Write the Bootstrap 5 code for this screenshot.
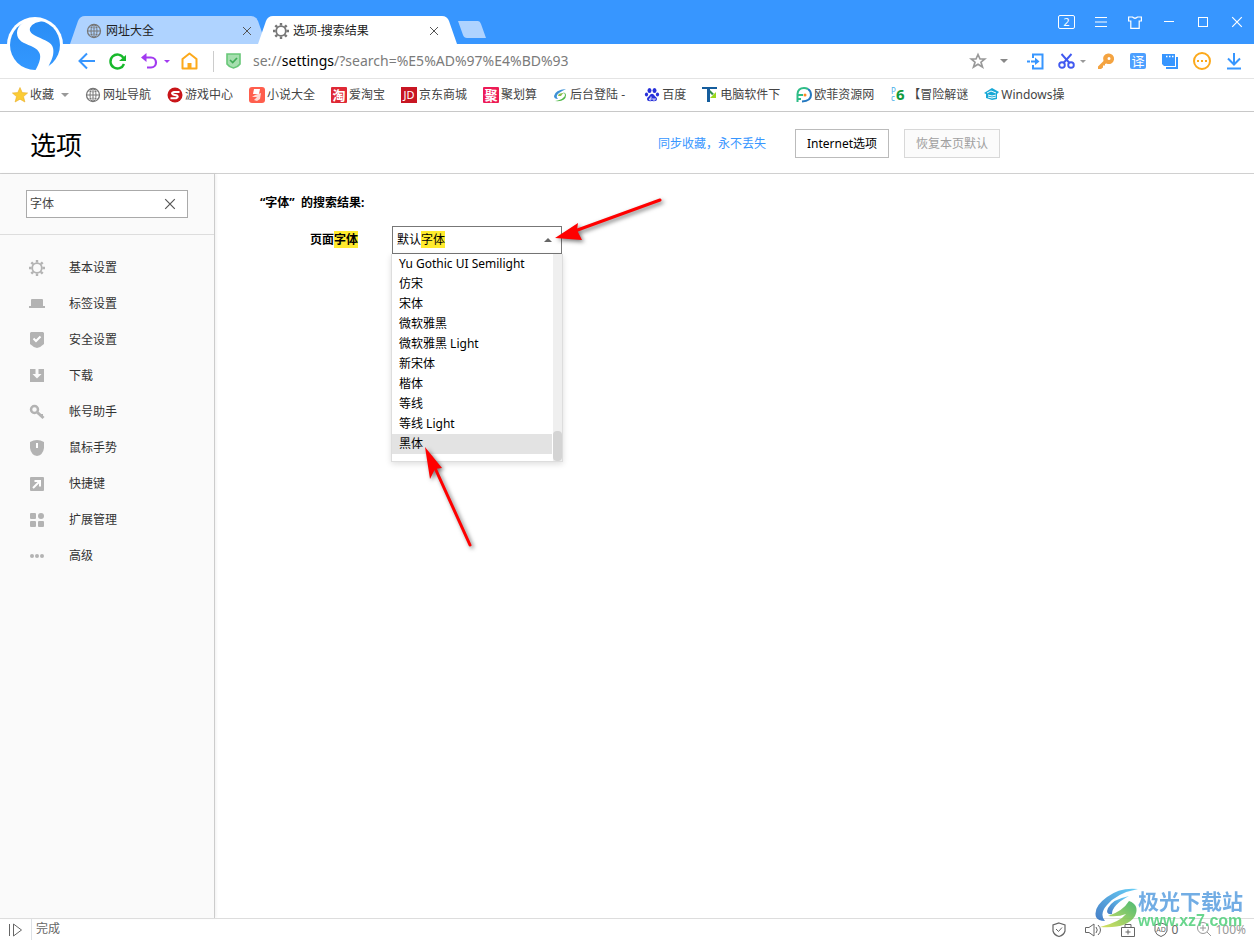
<!DOCTYPE html>
<html lang="zh-CN">
<head>
<meta charset="utf-8">
<meta name="viewport" content="width=device-width, initial-scale=1">
<title>选项-搜索结果</title>
<link rel="stylesheet" href="https://cdn.jsdelivr.net/npm/bootstrap@5.3.0/dist/css/bootstrap.min.css">
<style>
  body { font: 12px/20px "Noto Sans", "Noto Sans CJK SC", sans-serif; color: #000; background: #fff; }
  svg { display: block; flex: none; overflow: visible; }
  a { color: inherit; text-decoration: none; }
  button { color: inherit; }
  .plain { border: 0; background: none; padding: 0; display: flex; align-items: center; justify-content: center; }
  .ln { fill: none; stroke: currentColor; }

  /* title bar */
  .titlebar { height: 44px; background: #3796ff; padding-left: 70px; }
  .browser-logo { position: absolute; left: 7px; top: 16px; }
  .tab { height: 28px; width: 199px; padding: 2px 18px 0 15px; color: #222; clip-path: path("M0 28 L8 5 Q10 0 15 0 L184 0 Q189 0 191 5 L199 28 Z"); }
  .tab svg { color: #777; }
  .tab .plain svg { color: #555; }
  .tab-idle { background: #afd3ff; width: 196px; padding-right: 14px; padding-left: 16px; clip-path: path("M0 28 L8 5 Q10 0 15 0 L181 0 Q186 0 188 5 L196 28 Z"); }
  .tab-on { background: #fff; margin-left: -8px; }
  .newtab { margin: 0 0 6px 1px; }
  .winbtn { width: 34px; height: 44px; color: #fff; }

  /* address bar */
  .toolbar { height: 35px; padding: 0 4px 0 71px; border-bottom: 1px solid #e4e4e4; }
  .tool { height: 34px; width: 32px; }
  .navtool { height: 34px; width: 31px; }
  .narrow { width: 20px; }
  .caret { width: 0; border: 4px solid transparent; border-top: 4px solid currentColor; border-bottom: 0; }
  .caret-sm { border-left-width: 3px; border-right-width: 3px; border-top-width: 3px; }
  .vline { width: 1px; height: 21px; background: #ccc; }
  .address { font-size: 14px; color: #7b7b7b; outline: 0; }
  .address b { font-weight: 400; color: #000; }

  /* favourites */
  .favs { height: 33px; padding: 0 12px; gap: 16px; border-bottom: 1px solid #c8c8c8; color: #444; white-space: nowrap; }
  .favs a, .favs button { display: flex; align-items: center; gap: 2px; }
  .favs .caret { margin-left: 5px; color: #999; }

  /* page header */
  .pagehead { height: 62px; border-bottom: 1px solid #d0d0d0; }
  .headrow { max-width: 1000px; padding: 2px 0 0 30px; }
  .pagehead h1 { font-size: 26px; line-height: 36px; font-weight: 400; margin-top: 2px; }
  .synclink { color: #3796ff; margin-right: 29px; }
  .boxbtn { height: 29px; padding: 0 11px; border: 1px solid #bbb; background: #fff; }
  .boxbtn:disabled { color: #a0a0a0; border-color: #d8d8d8; background: #fbfbfb; }
  .boxbtn + .boxbtn { margin-left: 15px; }

  /* side panel */
  .side { width: 215px; background: #fafafa; border-right: 1px solid #ccc; box-shadow: 1px 0 3px #0001; }
  .finder { padding: 16px 26px; border-bottom: 1px solid #ddd; }
  .findbox { height: 28px; border: 1px solid #aaa; background: #fff; padding: 0 11px 0 3px; }
  .findbox input { border: 0; outline: 0; padding: 0; min-width: 0; flex: 1; color: #444; }
  .menu { padding-top: 15px; }
  .menu a { display: flex; align-items: center; gap: 24px; height: 36px; padding-left: 29px; color: #333; }
  .menu svg { color: #b3b3b3; }

  /* results */
  .results { padding: 19px 45px; }
  .results h2 { font-size: 12px; line-height: 20px; font-weight: 700; }
  .hit { background: #ffeb2d; color: inherit; padding: 0; }
  .fontrow { margin-top: 13px; padding-left: 50px; }
  .fontlabel { width: 82px; font-weight: 700; }
  .picker { width: 170px; }
  .pickbtn { width: 100%; height: 28px; border: 1px solid #777; padding: 0 9px 0 4px; background: #fff; }
  .up { border: 4px solid transparent; border-top: 0; border-bottom: 4px solid #666; }
  .picklist { position: absolute; top: 28px; left: -1px; width: 172px; background: #fff; border: 1px solid #ddd; border-top: 0; box-shadow: 0 2px 6px #0002; }
  .picklist ul { padding-bottom: 7px; }
  .picklist li { padding-left: 7px; height: 20px; white-space: nowrap; margin-right: 1px; }
  .picklist li[aria-selected=true] { background: #e3e3e3; }
  .track { width: 9px; background: #efefef; }
  .thumb { height: 30px; border-radius: 4px; background: #d4d4d4; }
  .arrows { position: absolute; left: 0; top: -40px; pointer-events: none; filter: drop-shadow(2px 2px 2px #0008); }

  /* status bar */
  .status { height: 22px; border-top: 1px solid #ddd; color: #666; padding-right: 8px; }
  .tray { gap: 19px; }
  .stamp { position: absolute; right: 11px; bottom: 8px; opacity: .85; pointer-events: none; }
  .stampname { font: 700 21px/24px "Noto Sans CJK SC", sans-serif; color: #5a9fe0; }
  .stampsite { font: 700 16px/18px "Liberation Sans", sans-serif; color: #4fd07a; }
</style>
</head>
<body class="d-flex flex-column min-vh-100 position-relative">

<svg width="0" height="0" class="position-absolute" aria-hidden="true">
  <symbol id="globe" viewBox="0 0 16 16"><g class="ln"><circle cx="8" cy="8" r="6.500" stroke-width="1.300"/><ellipse cx="8" cy="8" rx="3" ry="6.500"/><path d="M8 1.500V14.500M1.500 8H14.500"/><path stroke-width=".6" d="M3 4Q8 6 13 4M3 12Q8 10 13 12"/></g></symbol>
  <symbol id="gear" viewBox="0 0 16 16"><circle cx="8" cy="8" r="4.800" class="ln" stroke-width="1.800"/><path class="ln" stroke-width="2.400" d="M8 0V2.600M8 13.400V16M0 8H2.600M13.400 8H16M2.300 2.300L4.200 4.200M11.800 11.800L13.700 13.700M13.700 2.300L11.800 4.200M4.200 11.800L2.300 13.700"/></symbol>
  <symbol id="cross" viewBox="0 0 10 10"><path class="ln" d="M1 1L9 9M9 1L1 9"/></symbol>
</svg>

<header>
  <div class="titlebar d-flex align-items-end">
    <div class="tab tab-idle d-flex align-items-center">
      <svg width="16" height="16"><use href="#globe"/></svg>
      <span class="ms-1 flex-fill">网址大全</span>
      <button class="plain" aria-label="关闭标签"><svg width="10" height="10"><use href="#cross"/></svg></button>
    </div>
    <div class="tab tab-on d-flex align-items-center">
      <svg width="16" height="16"><use href="#gear"/></svg>
      <span class="ms-1 flex-fill">选项-搜索结果</span>
      <button class="plain" aria-label="关闭标签"><svg width="10" height="10"><use href="#cross"/></svg></button>
    </div>
    <button class="plain newtab" aria-label="新标签"><svg width="28" height="17"><path fill="#afd3ff" d="M0 0H20Q22 0 23 3L28 17H9Q6 17 5 14Z"/></svg></button>
    <div class="d-flex ms-auto">
      <button class="plain winbtn" aria-label="窗口数"><svg width="18" height="14"><rect x=".5" y=".5" width="16" height="13" rx="1.500" class="ln"/><text x="8.500" y="11" text-anchor="middle" font-size="11" fill="#fff">2</text></svg></button>
      <button class="plain winbtn" aria-label="菜单"><svg width="12" height="10"><path class="ln" d="M0 .5H12M0 5H12M0 9.500H12"/></svg></button>
      <button class="plain winbtn" aria-label="皮肤"><svg width="14" height="13"><path class="ln" stroke-width="1.200" d="M1 1H4.500Q7 3.500 9.500 1H13.400V5H11.200V12.400H2.800V5H.6V1Z"/></svg></button>
      <button class="plain winbtn" aria-label="最小化"><svg width="10" height="2"><path class="ln" d="M0 .5H10"/></svg></button>
      <button class="plain winbtn" aria-label="最大化"><svg width="10" height="10"><rect x=".5" y=".5" width="9" height="9" class="ln"/></svg></button>
      <button class="plain winbtn" aria-label="关闭"><svg width="12" height="12"><use href="#cross"/></svg></button>
    </div>
  </div>
  <svg class="browser-logo" width="56" height="56" viewBox="0 0 56 56" role="img" aria-label="浏览器">
    <defs><linearGradient id="lg" x2="0" y2="1"><stop stop-color="#2a8df5"/><stop offset="1" stop-color="#3398ff"/></linearGradient></defs>
    <circle cx="28" cy="29" r="28" fill="#fff"/><circle cx="28" cy="29" r="25" fill="url(#lg)"/>
    <path fill="#fff" d="M26 2C17 4 10 10 10 17C10 25 17 27 24 30C31 33 34 37 33 43Q32 48 28 55L38 55Q42 51 43 47C46 42 47 36 46 32C45 26 37 24 31 21C25 18 22 16 23 12Q26 5 40 5Q35 2 26 2Z"/>
  </svg>

  <div class="toolbar d-flex align-items-center">
    <button class="plain navtool" aria-label="后退"><svg width="18" height="16"><path class="ln" style="color:#3796ff" stroke-width="2" d="M17 8H2M9 .5L1.500 8L9 15.500"/></svg></button>
    <button class="plain navtool" aria-label="刷新"><svg width="18" height="17"><path fill="none" stroke="#17b82b" stroke-width="2.400" d="M14.500 5A7 7 0 1 0 15 11"/><path fill="#17b82b" d="M17 2V8H10Z"/></svg></button>
    <button class="plain navtool" aria-label="撤销"><svg width="16" height="16"><path fill="none" stroke="#a23af0" stroke-width="2.200" d="M4 4.500H10A5 5 0 0 1 10 14.500H6"/><path fill="#a23af0" d="M5.500 0V9L0 4.500Z"/></svg></button>
    <button class="plain" aria-label="撤销列表" style="color:#a23af0"><i class="caret caret-sm"></i></button>
    <button class="plain navtool ms-1" aria-label="主页"><svg width="17" height="18"><path fill="none" stroke="#fca91b" stroke-width="2" stroke-linejoin="round" d="M1.500 7L8.500 1.500L15.500 7V16.500H1.500Z"/><path fill="#fca91b" d="M6.500 16V11H10.500V16Z"/></svg></button>
    <span class="vline mx-2"></span>
    <svg class="ms-1" width="15" height="16"><path fill="#a5dfae" stroke="#68c778" stroke-width="1.600" d="M1 1H14V11Q12 14 7.500 15Q3 14 1 11Z"/><path fill="none" stroke="#3fab56" stroke-width="1.700" d="M4 7L6.700 9.500L11 5"/></svg>
    <div class="address ms-2 ps-1 flex-fill" role="textbox" contenteditable="true" spellcheck="false" aria-label="地址">se://<b>settings</b>/?search=%E5%AD%97%E4%BD%93</div>
    <button class="plain narrow" aria-label="收藏此页"><svg width="16" height="16"><path class="ln" style="color:#999" stroke-width="1.700" d="M8 1.500L10 6H14.700L11 9.200L12.500 14L8 11.200L3.500 14L5 9.200L1.300 6H6Z"/></svg></button>
    <button class="plain tool" aria-label="更多" style="color:#888"><i class="caret"></i></button>
    <button class="plain tool" aria-label="登录"><svg width="18" height="17"><path fill="none" stroke="#3796ff" stroke-width="2" d="M6 5V1.500H15.500V15.500H6V12M0 8.500H3M4 8.500H10"/><path fill="#3796ff" d="M8 4.500L12.500 8.500L8 12Z"/></svg></button>
    <button class="plain narrow ms-1" aria-label="截图"><svg width="17" height="16"><g fill="none" stroke="#4059f0" stroke-width="1.900"><circle cx="4" cy="12" r="2.800"/><circle cx="13" cy="12" r="2.800"/><path d="M3.500 1L11.500 10M13.500 1L5.500 10"/></g></svg></button>
    <button class="plain mx-1" aria-label="截图选项" style="color:#999"><i class="caret caret-sm"></i></button>
    <button class="plain tool" aria-label="密码"><svg width="16" height="16"><path fill="#f4a340" fill-rule="evenodd" d="M10 .5A5.300 5.300 0 1 1 8.500 10.500L7 11V12.500H5V14.500L3 16H0V13.500L5.500 8A5.300 5.300 0 0 1 10 .5ZM11 4A1.500 1.500 0 1 0 11 7A1.500 1.500 0 0 0 11 4Z"/></svg></button>
    <button class="plain tool" aria-label="翻译"><svg width="16" height="16"><rect width="16" height="16" rx="2" fill="#4da0ff"/><text x="8" y="12.500" text-anchor="middle" font-size="13" fill="#fff">译</text></svg></button>
    <button class="plain tool" aria-label="窗口"><svg width="16" height="16"><path fill="#3796ff" d="M0 1H13V13H2L0 11Z"/><path stroke="#fff" stroke-width="1.500" stroke-dasharray="1.500 1.500" d="M4 3.500H12"/><path fill="none" stroke="#3796ff" stroke-width="2" d="M15 4V15H4"/></svg></button>
    <button class="plain tool" aria-label="扩展"><svg width="18" height="18"><circle cx="9" cy="9" r="8" fill="none" stroke="#fca91b" stroke-width="2"/><path fill="#fca91b" d="M4 8H6V10H4ZM8 8H10V10H8ZM12 8H14V10H12Z"/></svg></button>
    <button class="plain tool" aria-label="下载"><svg width="14" height="17"><path fill="none" stroke="#3796ff" stroke-width="2" d="M7 0V11M1 5.500L7 11.500L13 5.500M0 15.500H14"/></svg></button>
  </div>

  <nav class="favs d-flex align-items-center" aria-label="收藏栏">
    <button class="plain"><svg width="16" height="16"><path fill="#fbcc35" stroke="#e9ad28" stroke-width=".6" d="M8 .5L10.200 5.600L15.600 6L11.500 9.600L12.900 15L8 12.200L3.100 15L4.500 9.600L.4 6L5.800 5.600Z"/></svg>收藏<i class="caret"></i></button>
    <a href="#"><svg width="16" height="16" style="color:#777"><use href="#globe"/></svg>网址导航</a>
    <a href="#"><svg width="16" height="16"><circle cx="8" cy="8" r="7.500" fill="#c91519"/><path fill="none" stroke="#fff" stroke-width="2" d="M12.500 5H7Q3.500 6 6 7.500L10 8.500Q12 10 9 11.300H3.500"/></svg>游戏中心</a>
    <a href="#"><svg width="16" height="16"><rect width="16" height="16" rx="3" fill="#ff5e4d"/><path fill="#fff" d="M5 2H11L10 7H4Z"/><path fill="#ffd9d4" d="M6 8L12 6L11 12L8 14L5 13L8 10H3Z"/></svg>小说大全</a>
    <a href="#"><svg width="16" height="16"><rect width="16" height="16" rx="1" fill="#df2936"/><text x="8" y="13" text-anchor="middle" font-size="13" font-weight="700" fill="#fff">淘</text></svg>爱淘宝</a>
    <a href="#"><svg width="16" height="16"><rect width="16" height="16" fill="#c81623"/><text x="8" y="12" text-anchor="middle" font-size="11" fill="#fff">JD</text></svg>京东商城</a>
    <a href="#"><svg width="16" height="16"><rect width="16" height="16" rx="1" fill="#ed1b55"/><text x="8" y="13" text-anchor="middle" font-size="13" font-weight="700" fill="#fff">聚</text></svg>聚划算</a>
    <a href="#"><svg width="15" height="16"><path fill="#3d91d6" d="M13 2Q2 3 1 9Q1 12 5 12Q2 9 6 6Q9 4 13 2Z"/><path fill="#50b848" d="M10 5Q14 8 10 11Q8 13 2 14Q13 15 13 8Q13 6 10 5Z"/><path fill="#88bf4a" d="M11 6Q5 6 5 9H8Q9 7 11 6Z"/></svg>后台登陆 -&nbsp;</a>
    <a href="#"><svg width="16" height="16" fill="#2730da"><ellipse cx="5.500" cy="3.500" rx="2" ry="2.500"/><ellipse cx="10.500" cy="3.500" rx="2" ry="2.500"/><ellipse cx="2.500" cy="7.500" rx="1.600" ry="2"/><ellipse cx="13.500" cy="7.500" rx="1.600" ry="2"/><path d="M8 6.800Q10 7 11 9.300Q14 11 12.500 13.500Q11 14.500 8 14Q5 14.500 3.500 13.500Q2 11 5 9.300Q6 7 8 6.800Z"/><path stroke="#fff" stroke-width=".8" fill="none" d="M7 9.500V13H5.500Q4.500 11.500 7 11M9 11V13H11V11"/></svg>百度</a>
    <a href="#"><svg width="16" height="16"><path fill="#155d9d" d="M0 0H15V2H8V15H5V2H0Z"/><path fill="#2f8f4a" d="M8 3L12 7L10 8L8 6Z"/><path fill="#9ad81c" d="M14 5V11H8Z"/></svg>电脑软件下</a>
    <a href="#"><svg width="16" height="16" fill="none" stroke-width="2"><path stroke="#2fbd87" d="M1.500 15V7Q2 1 8 1Q10 1 12 2M2 8H7M2 12H5"/><path stroke="#2478c0" d="M12 2Q15 4 15 8Q15 14 6 14.500"/><circle cx="9" cy="8" r="1.500" fill="#ff8a24"/></svg>欧菲资源网</a>
    <a href="#"><svg width="16" height="16"><text x="1" y="7" font-size="8" fill="#4bb0e8">P</text><text x="1" y="14" font-size="8" fill="#4bb0e8">c</text><text x="6" y="13" font-size="15" font-weight="700" fill="#119b40">6</text></svg>【冒险解谜</a>
    <a href="#"><svg width="15" height="16"><path fill="#18a8d6" d="M0 6L8 1L15 5L13 7V12L8 13L2 11V7Z"/><path fill="none" stroke="#fff" d="M3 6L7 4L12 6M4 8L8 9L12 8M4 10L8 11L12 10"/></svg>Windows操</a>
  </nav>
</header>

<div class="pagehead">
  <div class="headrow h-100 d-flex align-items-center">
    <h1 class="mb-0 me-auto">选项</h1>
    <a href="#" class="synclink">同步收藏，永不丢失</a>
    <button class="boxbtn">Internet选项</button>
    <button class="boxbtn" disabled>恢复本页默认</button>
  </div>
</div>

<div class="d-flex flex-fill">
  <aside class="side flex-shrink-0">
    <div class="finder"><div class="findbox d-flex align-items-center">
      <input type="text" value="字体" aria-label="搜索设置">
      <button class="plain" aria-label="清除" style="color:#555"><svg width="12" height="12"><use href="#cross"/></svg></button>
    </div></div>
    <nav class="menu">
      <a href="#"><svg width="16" height="16"><use href="#gear"/></svg>基本设置</a>
      <a href="#"><svg width="16" height="16" fill="currentColor"><path d="M2 4Q2 3 3 3H13Q14 3 14 4V10H16V12H0V10H2Z"/></svg>标签设置</a>
      <a href="#"><svg width="16" height="16"><path fill="currentColor" d="M2 0H14L15 1V12Q12 15 8 16Q4 15 1 12V1Z"/><path fill="none" stroke="#fff" stroke-width="2" d="M4.500 6.500L7 9L11.500 4.500"/></svg>安全设置</a>
      <a href="#"><svg width="16" height="16"><path fill="currentColor" d="M1 1H15V14H1Z"/><path fill="#fafafa" d="M6.500 1H9.500V6H12.500L8 10.500L3.500 6H6.500Z"/></svg>下载</a>
      <a href="#"><svg width="16" height="16" fill="none" stroke="currentColor"><circle cx="5.500" cy="5.500" r="3.500" stroke-width="2.500"/><path stroke-width="3" d="M8.500 8.500L14.500 14"/><path stroke-width="2" d="M13 10V13"/></svg>帐号助手</a>
      <a href="#"><svg width="16" height="16"><path fill="currentColor" d="M1 2Q8-2 15 2V8Q14 15 8 16Q2 15 1 8Z"/><path fill="#fff" d="M7 3H9V8H7Z"/></svg>鼠标手势</a>
      <a href="#"><svg width="16" height="16"><rect x="1" y="1" width="14" height="14" rx="1" fill="currentColor"/><path fill="none" stroke="#fff" stroke-width="2" d="M4 12L11 5M5.500 5H11V10.500"/></svg>快捷键</a>
      <a href="#"><svg width="16" height="16" fill="currentColor"><rect x="1" y="1" width="6" height="6" rx="1"/><circle cx="12" cy="4" r="3"/><rect x="1" y="9" width="6" height="6" rx="1"/><rect x="9" y="9" width="6" height="6" rx="1"/></svg>扩展管理</a>
      <a href="#"><svg width="16" height="16" fill="currentColor"><circle cx="3" cy="8" r="2"/><circle cx="8" cy="8" r="2"/><circle cx="13" cy="8" r="2"/></svg>高级</a>
    </nav>
  </aside>

  <main class="results flex-fill">
    <h2 class="mb-0">“字体”&nbsp; 的搜索结果:</h2>
    <div class="fontrow d-flex align-items-center">
      <span class="fontlabel" id="fontlabel">页面<mark class="hit">字体</mark></span>
      <div class="picker position-relative">
        <button class="pickbtn d-flex align-items-center justify-content-between" aria-haspopup="listbox" aria-expanded="true" aria-labelledby="fontlabel">
          <span>默认<mark class="hit">字体</mark></span><i class="up"></i>
        </button>
        <div class="picklist d-flex">
          <ul class="list-unstyled mb-0 flex-fill" role="listbox" aria-labelledby="fontlabel">
            <li role="option">Yu Gothic UI Semilight</li>
            <li role="option">仿宋</li>
            <li role="option">宋体</li>
            <li role="option">微软雅黑</li>
            <li role="option">微软雅黑 Light</li>
            <li role="option">新宋体</li>
            <li role="option">楷体</li>
            <li role="option">等线</li>
            <li role="option">等线 Light</li>
            <li role="option" aria-selected="true">黑体</li>
          </ul>
          <div class="track d-flex flex-column justify-content-end"><div class="thumb"></div></div>
        </div>
        <svg class="arrows" width="280" height="370" aria-hidden="true">
          <path fill="none" stroke="#f00" stroke-width="3" stroke-linecap="round" d="M268 14L180 46M78 359L43 282"/>
          <path fill="#f00" d="M163 52L186 37L185 44L190 54ZM33 261L50 282L43 283L38 293Z"/>
        </svg>
      </div>
    </div>
  </main>
</div>

<footer class="status d-flex align-items-center">
  <button class="plain ms-2" aria-label="侧边栏"><svg width="15" height="14"><path class="ln" d="M1.500 1V13M5.500 1V13L13.500 7Z"/></svg></button>
  <span class="border-start align-self-stretch ms-2 ps-1">完成</span>
  <div class="tray d-flex align-items-center ms-auto">
    <button class="plain" aria-label="安全"><svg width="14" height="15"><path class="ln" stroke-width="1.200" d="M7 1L13 3V9Q12 13 7 14.500Q2 13 1 9V3Z"/><path class="ln" d="M4 7L6.500 9.500L10 5.500"/></svg></button>
    <button class="plain" aria-label="声音"><svg width="17" height="14"><path class="ln" d="M.5 4.500H4L9 1V13L4 9.500H.5ZM11 4Q13.500 7 11 10M13 2Q18 7 13 12"/></svg></button>
    <button class="plain" aria-label="隐私"><svg width="14" height="14"><path class="ln" d="M.5 4.500H13.500V13.500H.5ZM4 4V1.500H10V4M7 6.500V11.500M4.500 9H9.500"/></svg></button>
    <button class="plain gap-1" aria-label="广告拦截"><svg width="14" height="15"><path class="ln" d="M7 1L13 3V9Q12 13 7 14.500Q2 13 1 9V3Z"/><text x="7" y="10" font-size="7" text-anchor="middle" fill="currentColor">AD</text></svg>0</button>
    <button class="plain gap-1" aria-label="缩放" style="color:#999"><svg width="14" height="15"><path class="ln" d="M6 3V9M3 6H9M10 10L14 14"/><circle cx="6" cy="6" r="5.500" class="ln"/></svg>100%</button>
  </div>
</footer>

<div class="stamp d-flex align-items-start">
  <svg width="43" height="44" viewBox="0 0 43 44" aria-hidden="true">
    <defs><linearGradient id="sb" x1="1" x2="0" y2="1"><stop stop-color="#4fc8f5"/><stop offset="1" stop-color="#2768bd"/></linearGradient><linearGradient id="sg" x1="1" x2="0" y2="1"><stop stop-color="#2eae5d"/><stop offset="1" stop-color="#d3dc42"/></linearGradient></defs>
    <path fill="url(#sb)" d="M43 1Q25-1 12 9Q-2 19 1 29Q3 33 10 33Q4 26 12 17Q22 5 43 1Z"/>
    <path fill="url(#sb)" d="M34 8Q18 11 13 20Q10 27 17 26Q17 17 34 8Z"/>
    <path fill="url(#sg)" d="M34 13Q45 17 40 28Q32 41 5 39Q25 34 31 26Q24 29 13 28Q28 23 34 13Z"/>
  </svg>
  <div><div class="stampname">极光下载站</div><div class="stampsite">www.xz7.com</div></div>
</div>

<script src="https://cdn.jsdelivr.net/npm/bootstrap@5.3.0/dist/js/bootstrap.bundle.min.js"></script>
</body>
</html>
